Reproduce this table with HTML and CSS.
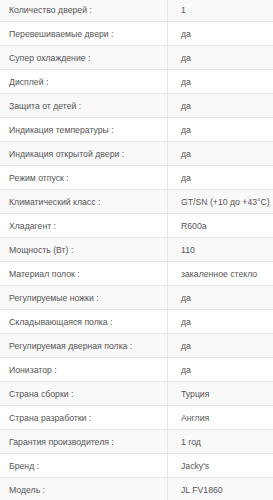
FILE: index.html
```html
<!DOCTYPE html>
<html lang="ru">
<head>
<meta charset="utf-8">
<link rel="stylesheet" href="styles.css">
</head>
<body>
<table class="specs">
<tbody>
<tr><td class="name">Количество дверей :</td><td class="val">1</td></tr>
<tr><td class="name">Перевешиваемые двери :</td><td class="val">да</td></tr>
<tr><td class="name">Супер охлаждение :</td><td class="val">да</td></tr>
<tr><td class="name">Дисплей :</td><td class="val">да</td></tr>
<tr><td class="name">Защита от детей :</td><td class="val">да</td></tr>
<tr><td class="name">Индикация температуры :</td><td class="val">да</td></tr>
<tr><td class="name">Индикация открытой двери :</td><td class="val">да</td></tr>
<tr><td class="name">Режим отпуск :</td><td class="val">да</td></tr>
<tr><td class="name">Климатический класс :</td><td class="val">GT/SN (+10 до +43°C)</td></tr>
<tr><td class="name">Хладагент :</td><td class="val">R600a</td></tr>
<tr><td class="name">Мощность (Вт) :</td><td class="val">110</td></tr>
<tr><td class="name">Материал полок :</td><td class="val">закаленное стекло</td></tr>
<tr><td class="name">Регулируемые ножки :</td><td class="val">да</td></tr>
<tr><td class="name">Складывающаяся полка :</td><td class="val">да</td></tr>
<tr><td class="name">Регулируемая дверная полка :</td><td class="val">да</td></tr>
<tr><td class="name">Ионизатор :</td><td class="val">да</td></tr>
<tr><td class="name">Страна сборки :</td><td class="val">Турция</td></tr>
<tr><td class="name">Страна разработки :</td><td class="val">Англия</td></tr>
<tr><td class="name">Гарантия производителя :</td><td class="val">1 год</td></tr>
<tr><td class="name">Бренд :</td><td class="val">Jacky's</td></tr>
<tr><td class="name">Модель :</td><td class="val">JL FV1860</td></tr>
</tbody>
</table>
</body>
</html>
```
FILE: styles.css
```css
html, body {
  margin: 0;
  padding: 0;
  background: #fff;
}
.specs {
  width: 273px;
  table-layout: fixed;
  border-collapse: collapse;
  margin-top: -3px;
  font-family: "Liberation Sans", Arial, sans-serif;
  font-size: 8.7px;
  color: #555;
}
.specs tr {
  height: 24px;
}
.specs tr:nth-child(odd) {
  background: #f9f9f9;
}
.specs td {
  border-top: 1px solid #e6e6e6;
  padding: 0;
  vertical-align: middle;
  white-space: nowrap;
}
.specs .name {
  width: 158px;
  padding-left: 9px;
  border-right: 1px solid #e6e6e6;
}
.specs .val {
  padding-left: 13px;
}
```
